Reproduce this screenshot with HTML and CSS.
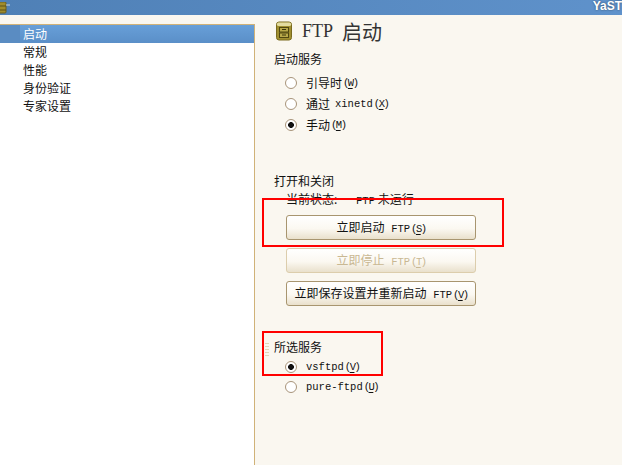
FILE: index.html
```html
<!DOCTYPE html>
<html lang="zh-CN">
<head>
    <meta charset="UTF-8">
    <meta name="viewport" content="width=device-width, initial-scale=1.0">
    <title>YaST FTP</title>
    <link rel="stylesheet" href="styles.css">
</head>
<body>
    <header class="titlebar">
        <svg class="corner-icon" width="10" height="12" viewBox="0 0 10 12">
            <rect x="-6" y="0" width="12" height="11" rx="1" fill="#a08c2c" stroke="#6d5f1c"/>
            <path d="M0 4H6M0 8H6" stroke="#5c5016"/>
            <path d="M6 3H10" stroke="#c9d3da"/>
        </svg>
        <span class="titlebar-text">YaST</span>
    </header>
    <div class="strip"></div>
    <div class="main">
        <nav class="tree">
            <div class="tree-item selected"><span>启动</span></div>
            <div class="tree-item"><span>常规</span></div>
            <div class="tree-item"><span>性能</span></div>
            <div class="tree-item"><span>身份验证</span></div>
            <div class="tree-item"><span>专家设置</span></div>
        </nav>
        <section class="content">
            <h1 class="heading">
                <svg class="heading-icon" width="18" height="20" viewBox="0 0 18 20">
                    <rect x="1.5" y="1" width="15" height="18" rx="2.5" fill="#a08f30" stroke="#7a6b1e"/>
                    <rect x="2" y="1.5" width="14" height="3.5" rx="1.5" fill="#e3dca0"/>
                    <rect x="4.5" y="6.5" width="9" height="4.5" fill="#b8a94a" stroke="#4f4610"/>
                    <rect x="4.5" y="12" width="9" height="4.5" fill="#b8a94a" stroke="#4f4610"/>
                    <path d="M7 8.5H11M7 14H11" stroke="#3d360b"/>
                </svg>
                <span class="heading-latin">FTP</span>
                <span class="heading-cjk">启动</span>
            </h1>

            <div class="group start-group">
                <div class="group-title">启动服务</div>
                <div class="options">
                    <label class="radio"><i class="dot"></i><span>引导时</span><span class="mono key">(<u>W</u>)</span></label>
                    <label class="radio"><i class="dot"></i><span>通过</span><span class="mono name">xinetd</span><span class="mono key">(<u>X</u>)</span></label>
                    <label class="radio"><i class="dot on"></i><span>手动</span><span class="mono key">(<u>M</u>)</span></label>
                </div>
            </div>

            <div class="group control-group">
                <div class="group-title">打开和关闭</div>
                <div class="status">当前状态: <span class="mono status-value">FTP</span> 未运行</div>
                <div class="buttons">
                    <button class="btn">立即启动 <span class="mono btn-name">FTP</span><span class="mono key">(<u>S</u>)</span></button>
                    <button class="btn disabled">立即停止 <span class="mono btn-name">FTP</span><span class="mono key">(<u>T</u>)</span></button>
                    <button class="btn">立即保存设置并重新启动 <span class="mono btn-name">FTP</span><span class="mono key">(<u>V</u>)</span></button>
                </div>
            </div>

            <div class="group service-group">
                <div class="group-title">所选服务</div>
                <div class="options">
                    <label class="radio"><i class="dot on"></i><span class="mono">vsftpd</span><span class="mono key">(<u>V</u>)</span></label>
                    <label class="radio"><i class="dot"></i><span class="mono">pure-ftpd</span><span class="mono key">(<u>U</u>)</span></label>
                </div>
            </div>

            <div class="grip"></div>
            <div class="mark mark-button"></div>
            <div class="mark mark-service"></div>
        </section>
    </div>
</body>
</html>
```

FILE: styles.css
```css
/* global */
html, body {
    height: 100%;
}
body {
    margin: 0;
    height: 465px;
    overflow: hidden;
    display: flex;
    flex-direction: column;
    background: #faf7f0;
    color: #111;
    font-family: "Noto Sans CJK SC", "Liberation Sans", sans-serif;
    font-size: 12px;
}
.mono {
    font-family: "Liberation Mono", monospace;
    font-size: 10.5px;
}
.key {
    margin-left: 1px;
    letter-spacing: -1.5px;
}
.key u {
    text-underline-offset: 2px;
}

/* title bar */
.titlebar {
    height: 15px;
    flex: none;
    display: flex;
    justify-content: space-between;
    align-items: flex-end;
    background: linear-gradient(to right, #4f80b6, #5f92cb);
    overflow: hidden;
}
.corner-icon {
    display: block;
    margin-bottom: 1px;
}
.titlebar-text {
    align-self: flex-start;
    color: #fff;
    font-family: "Liberation Sans", sans-serif;
    font-size: 12px;
    font-weight: bold;
    line-height: 12px;
    text-shadow: 0 0 2px #33465e;
}
.strip {
    height: 9px;
    flex: none;
}

/* main */
.main {
    flex: 1;
    display: flex;
    min-height: 0;
}
.tree {
    width: 255px;
    flex: none;
    box-sizing: border-box;
    background: white;
    border-top: 1px solid #d0b278;
    border-right: 1px solid #d0b278;
}
.tree-item {
    height: 18px;
    line-height: 18px;
    padding-left: 23px;
}
.tree-item span {
    display: block;
}
.tree-item.selected {
    padding-left: 0;
    background: #5a8cc2;
    color: white;
}
.tree-item.selected span {
    margin-left: 20px;
    padding-left: 3px;
    background: linear-gradient(to bottom, #689fd8, #5a8fc8);
}

/* right side */
.content {
    flex: 1;
    position: relative;
    padding: 0 0 0 19px;
}
.heading {
    display: flex;
    align-items: center;
    height: 20px;
    margin: -3px 0 0 1px;
    font-weight: normal;
    color: #333;
}
.heading-icon {
    flex: none;
    margin-right: 9px;
}
.heading-latin {
    font-family: "Liberation Serif", serif;
    font-size: 18px;
    margin-right: 9px;
}
.heading-cjk {
    font-size: 20px;
}
.group-title {
    height: 18px;
    line-height: 18px;
}
.start-group {
    margin-top: 9px;
}
.options {
    margin-left: 11px;
}
.start-group .options {
    margin-top: 4px;
}
.radio {
    display: flex;
    align-items: center;
    height: 21px;
}
.dot {
    width: 12px;
    height: 12px;
    flex: none;
    box-sizing: border-box;
    margin-right: 9px;
    border: 1.5px solid #a8947a;
    border-radius: 50%;
    background: white;
}
.dot.on {
    background: radial-gradient(circle, #111 0 2.6px, white 3.2px);
}
.radio .name {
    margin-left: 5px;
}
.control-group {
    margin-top: 37px;
}
.status {
    height: 18px;
    line-height: 18px;
    margin-left: 12px;
}
.status-value {
    margin-left: 16px;
}
.buttons {
    display: flex;
    flex-direction: column;
    gap: 8px;
    margin-top: 7px;
    margin-left: 12px;
}
.btn {
    width: 190px;
    height: 25px;
    padding: 0;
    border: 1px solid #a8956f;
    border-radius: 3px;
    background: linear-gradient(to bottom, #ffffff, #fbf8f1 55%, #e9e0cc);
    color: #111;
    font-family: inherit;
    font-size: 12px;
    line-height: 20px;
}
.btn-name {
    margin-left: 4px;
}
.btn.disabled {
    border-color: #dccdac;
    color: #c9b893;
}
.service-group {
    margin-top: 32px;
}
.service-group .options {
    margin-top: 1px;
}
.service-group .radio {
    height: 20px;
}

/* small dotted handle beside the last group */
.grip {
    position: absolute;
    left: 10px;
    top: 318px;
    width: 4px;
    height: 16px;
    background: radial-gradient(circle, #e0d4b8 1px, transparent 1px) 0 0 / 2px 3px;
}

/* red marks drawn over the screenshot */
.mark {
    position: absolute;
    box-sizing: border-box;
    border: 2px solid #f00;
    pointer-events: none;
}
.mark-button {
    left: 7px;
    top: 174px;
    width: 242px;
    height: 49px;
}
.mark-service {
    left: 7px;
    top: 307px;
    width: 121px;
    height: 45px;
}
```
